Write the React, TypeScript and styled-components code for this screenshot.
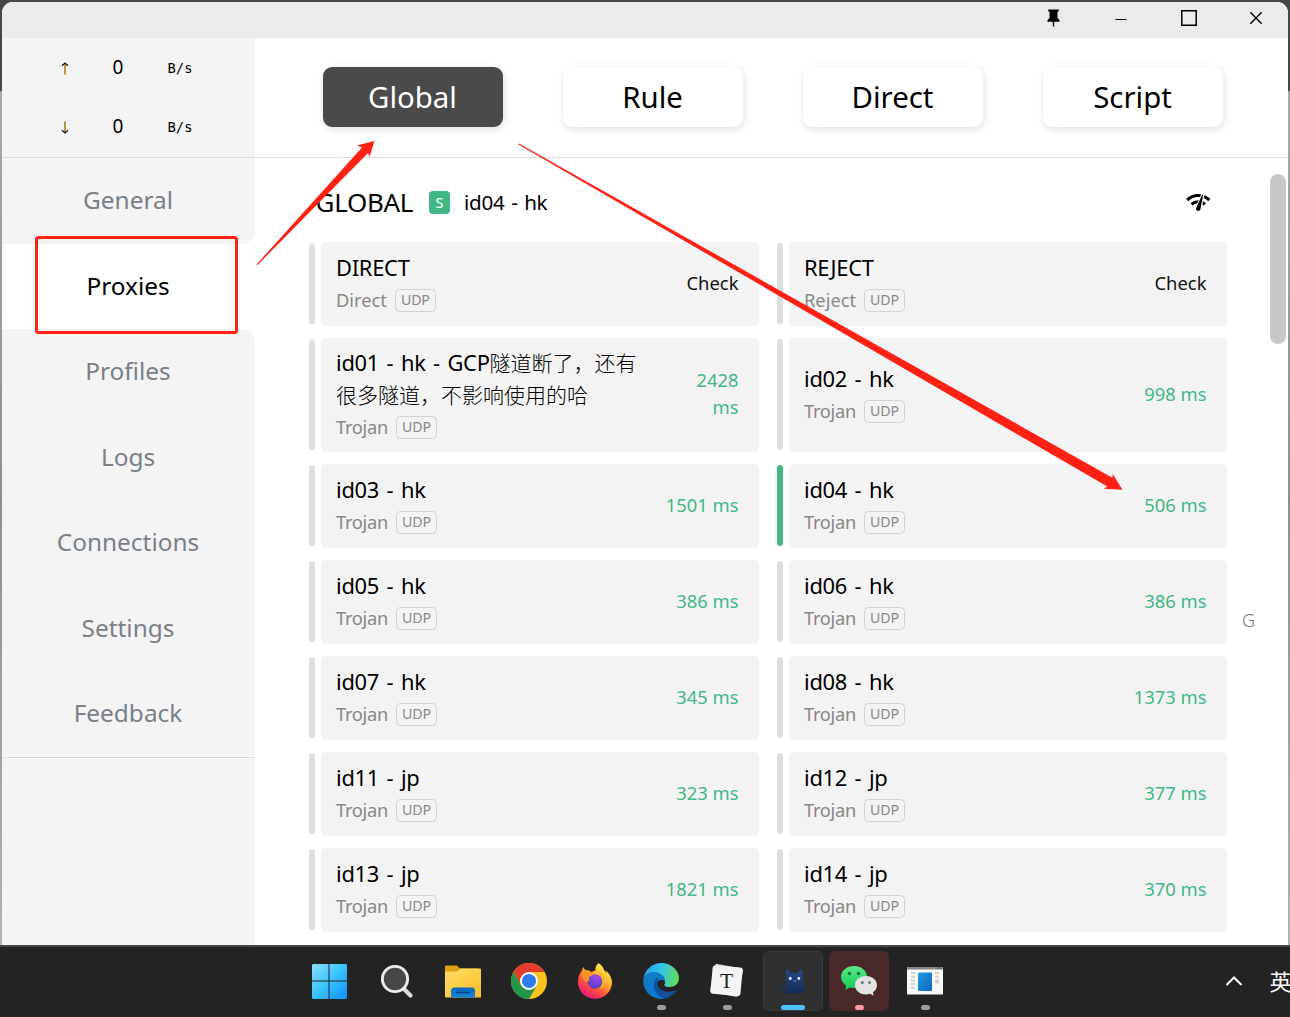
import React from "react";
import styled, { createGlobalStyle } from "styled-components";
import { MdNetworkCheck } from "react-icons/md";

const GlobalStyle = createGlobalStyle`
  * { box-sizing: border-box; }
  body {
    margin: 0;
    font-family: "Noto Sans", "Noto Sans CJK SC", sans-serif;
    color: #000;
    overflow: hidden;
  }
`;

const Desktop = styled.div`
  position: relative;
  width: 1290px;
  height: 1017px;
  overflow: hidden;
  display: flex;
  flex-direction: column;
  background: linear-gradient(#484646 0, #484646 90px, #a9a9a9 92px, #a0a0a0 220px, #8f8f8f 500px, #b2b2b2 945px);
`;

const Window = styled.div`
  flex: none;
  width: 1286px;
  height: 943px;
  margin: 2px 2px 0;
  display: flex;
  flex-direction: column;
  background: #fff;
  border-radius: 11px 11px 0 0;
  overflow: hidden;
`;

const TitleBar = styled.div`
  flex: none;
  height: 36px;
  padding-right: 12px;
  display: flex;
  justify-content: flex-end;
  gap: 27.5px;
  background: #ebebeb;
`;

const TitleButton = styled.div`
  width: 40px;
  height: 32px;
  display: flex;
  align-items: center;
  justify-content: center;
  svg { display: block; }
`;

const Body = styled.div`
  flex: 1;
  min-height: 0;
  display: flex;
`;

const Sidebar = styled.div`
  flex: none;
  width: 253px;
  display: flex;
  flex-direction: column;
  background: #fff;
`;

const Traffic = styled.div`
  flex: none;
  height: 120px;
  background: #f4f4f4;
  border-bottom: 1px solid #dcdcdc;
`;

const TrafficRow = styled.div`
  height: 59px;
  padding-left: 50px;
  display: grid;
  grid-template-columns: 26px 80px 44px;
  align-items: center;
  text-align: center;
`;

const TrafficArrow = styled.span`
  display: flex;
  justify-content: center;
  padding-top: 2px;
`;

const TrafficValue = styled.span`
  padding-bottom: 1px;
  font-size: 19px;
  line-height: 28px;
`;

const TrafficUnit = styled.span`
  font: 13.8px/28px "DejaVu Sans Mono", monospace;
  padding-top: 1px;
`;

const NavItem = styled.div<{ $active?: boolean; $corner?: "top" | "bottom" }>`
  flex: none;
  height: 85.5px;
  padding: 0 1px 1px 0;
  display: flex;
  align-items: center;
  justify-content: center;
  font-size: 24.4px;
  line-height: 36px;
  color: ${(p) => (p.$active ? "#000" : "#788088")};
  background: ${(p) => (p.$active ? "#fff" : "#f4f4f4")};
  border-radius: ${(p) => (p.$corner === "bottom" ? "0 0 14px 0" : p.$corner === "top" ? "0 14px 0 0" : "0")};

  &:last-of-type { height: 85px; }
`;

const SidebarFill = styled.section`
  flex: 1;
  margin-top: 1px;
  background: #f4f4f4;
  border-top: 1px solid #dcdcdc;
`;

const Main = styled.div`
  flex: 1;
  min-width: 0;
  display: flex;
  flex-direction: column;
`;

const Modes = styled.div`
  flex: none;
  height: 120px;
  padding: 29px 0 0 68px;
  display: flex;
  gap: 60px;
  border-bottom: 1px solid #dcdcdc;
`;

const ModeButton = styled.div<{ $active?: boolean }>`
  width: 180px;
  height: 60px;
  padding-right: 1px;
  border-radius: 9px;
  display: flex;
  align-items: center;
  justify-content: center;
  font-size: 29.4px;
  line-height: 60px;
  color: ${(p) => (p.$active ? "#fff" : "#000")};
  background: ${(p) => (p.$active ? "#4a4a4a" : "#fff")};
  box-shadow: 1px 2px 9px rgba(0, 0, 0, 0.13);
`;

const Scroller = styled.div`
  flex: 1;
  min-height: 0;
  display: flex;
  overflow: hidden;
`;

const Group = styled.div`
  width: 918px;
  margin-left: 54px;
`;

const GroupHead = styled.div`
  height: 84px;
  padding: 4px 16px 0 6.500px;
  display: flex;
  align-items: center;
  line-height: 40px;
`;

const GroupName = styled.span`
  width: 113.500px;
  font-size: 26px;
  letter-spacing: -0.3px;
  white-space: nowrap;
`;

const SelectorBadge = styled.span`
  width: 21px;
  height: 23px;
  border-radius: 4px;
  background: #41b883;
  color: #fff;
  font-size: 14.5px;
  line-height: 23px;
  text-align: center;
`;

const CurrentProxy = styled.span`
  flex: 1;
  padding-left: 14px;
  font-size: 20.6px;
  letter-spacing: -0.25px;
  word-spacing: 1.5px;
`;

const Grid = styled.div`
  display: grid;
  grid-template-columns: 450px 450px;
  column-gap: 18px;
  row-gap: 12px;
`;

const Proxy = styled.div`
  display: flex;
  gap: 6px;
`;

const Marker = styled.div<{ $on?: boolean }>`
  width: 6px;
  margin: 1px 0 2px;
  border-radius: 3px;
  background: ${(p) => (p.$on ? "#41b883" : "#dedede")};
`;

const Card = styled.div`
  flex: 1;
  min-height: 84px;
  padding: 10px 20.500px 10px 15px;
  display: flex;
  align-items: center;
  justify-content: space-between;
  border-radius: 4.5px;
  background: #f3f3f3;
`;

const ProxyName = styled.div`
  margin-top: -1px;
  padding-bottom: 1px;
  font-size: 21.9px;
  line-height: 32px;
  letter-spacing: -0.27px;
  word-spacing: 2.1px;
  white-space: pre;
`;

const Cjk = styled.span`
  font-size: 21px;
  line-height: 1;
  letter-spacing: 0;
  font-family: "Noto Sans CJK SC", sans-serif;
  font-weight: 300;
`;

const ProxyMeta = styled.div<{ $tight?: boolean }>`
  height: 30px;
  display: flex;
  align-items: center;
  gap: 8px;
  font-size: 18.3px;
  letter-spacing: ${(p) => (p.$tight ? "-0.3px" : "0")};
  line-height: 30px;
  color: #888;
`;

const Tag = styled.span`
  height: 23px;
  padding: 0 5px;
  border: 1px solid #d2d2d2;
  border-radius: 4.5px;
  font-size: 14.2px;
  letter-spacing: -0.15px;
  line-height: 20px;
`;

const Delay = styled.div<{ $pending?: boolean }>`
  padding-bottom: 4px;
  font-size: 18.4px;
  line-height: 27px;
  text-align: right;
  white-space: pre;
  color: ${(p) => (p.$pending ? "#111" : "#41b883")};
`;

const LetterIndex = styled.div`
  width: 43px;
  padding-top: 449px;
  text-align: center;
  font-size: 18px;
  line-height: 27px;
  font-weight: 300;
  color: #777;
`;

const Thumb = styled.div`
  width: 16px;
  height: 170px;
  margin-top: 16px;
  border-radius: 8px;
  background: #c9c8c7;
`;

const Annotation = styled.svg`
  position: absolute;
  left: 0;
  top: 0;
  pointer-events: none;
`;

const Taskbar = styled.div`
  flex: none;
  height: 72px;
  display: flex;
  align-items: flex-start;
  justify-content: space-between;
  padding: 4px 0 0 301px;
  background: #232323;
  border-top: 2px solid #464646;
`;

const Apps = styled.div`
  display: flex;
  gap: 6px;
`;

const AppSlot = styled.div<{ $tone?: "active" | "alert" }>`
  position: relative;
  width: 60px;
  height: 60px;
  display: flex;
  align-items: center;
  justify-content: center;
  border-radius: 6px;
  border: 1px solid ${(p) => (p.$tone === "active" ? "#3b3b3b" : "transparent")};
  background: ${(p) => (p.$tone === "active" ? "#303030" : p.$tone === "alert" ? "#482828" : "transparent")};
  svg { display: block; }
`;

const Indicator = styled.span<{ $w: number; $color: string }>`
  position: absolute;
  bottom: 0;
  left: calc(50% - ${(p) => p.$w / 2}px);
  width: ${(p) => p.$w}px;
  height: 5px;
  border-radius: 2.5px;
  background: ${(p) => p.$color};
`;

const Tray = styled.div`
  height: 60px;
  width: 65px;
  padding-bottom: 3px;
  display: flex;
  align-items: center;
  gap: 26.5px;
  color: #fff;
  font: 22px/34px "Noto Sans CJK SC", sans-serif;
  overflow: hidden;
  white-space: nowrap;
  svg { flex: none; margin-top: 2px; }
`;

const StartSvg = styled.svg`
  margin-left: -4px;
`;

const WindowsLogo = () => (
  <StartSvg width="36" height="36" viewBox="0 0 36 36">
    <defs>
      <linearGradient id="win" x1="0" y1="0" x2="36" y2="36" gradientUnits="userSpaceOnUse">
        <stop stopColor="#8fe0ff" /><stop offset=".5" stopColor="#3ac4fb" /><stop offset="1" stopColor="#0c90fb" />
      </linearGradient>
    </defs>
    <path fill="url(#win)" d="M2 1H17.500v16.500H1V2ZM18.500 1H35l1 1V17.500h-17.500ZM1 18.500H17.500V36H2l-1-1ZM18.500 18.500H36V35l-1 1H18.500Z" />
  </StartSvg>
);

const SearchIcon = () => (
  <svg width="36" height="36" viewBox="0 0 36 36">
    <path d="M25 26l6.500 6.500" stroke="#d9dadd" strokeWidth="4.200" strokeLinecap="round" />
    <circle cx="16" cy="16" r="12.600" fill="#474747" stroke="#ececec" strokeWidth="2.900" />
  </svg>
);

const ExplorerIcon = () => (
  <svg width="36" height="36" viewBox="0 0 36 36">
    <defs>
      <linearGradient id="folder" x1="0" y1="0" x2="1" y2="1"><stop stopColor="#ffdc6b" /><stop offset="1" stopColor="#fdbe20" /></linearGradient>
      <linearGradient id="dock" x1="0" y1="0" x2="0" y2="1"><stop stopColor="#0a65b5" /><stop offset="1" stopColor="#128be0" /></linearGradient>
    </defs>
    <path fill="#dfa00e" d="M0 3.500Q0 2.500 1 2.500H12l3 3H33v6H0Z" />
    <path fill="url(#folder)" d="M0 8.500H12l3.500-3H35q1 0 1 1V34.500H1q-1 0-1-1Z" />
    <path fill="url(#dock)" d="M6 34.500V28q0-3.500 3.500-3.500h17q3.500 0 3.500 3.500v6.500Z" />
    <path d="M11.500 29.500h13" stroke="#07457f" strokeWidth="1.600" strokeLinecap="round" />
  </svg>
);

const ChromeIcon = () => (
  <svg width="36" height="36" viewBox="0 0 36 36">
    <circle cx="18" cy="18" r="18" fill="#fcc31e" />
    <path fill="#e33b2e" d="M18 18V9H33.590A18 18 0 0 0 2.410 9L10.200 22.500Z" />
    <path fill="#229548" d="M2.410 9A18 18 0 0 0 18 36L25.800 22.500 18 24 10.200 22.500Z" />
    <circle cx="18" cy="18" r="9" fill="#fff" />
    <circle cx="18" cy="18" r="7.100" fill="#2f7bee" />
  </svg>
);

const FirefoxIcon = () => (
  <svg width="36" height="36" viewBox="0 0 36 36">
    <defs>
      <linearGradient id="fire" x1="30" y1="3" x2="8" y2="34" gradientUnits="userSpaceOnUse">
        <stop stopColor="#fff44f" /><stop offset=".38" stopColor="#ffb02b" /><stop offset=".65" stopColor="#ff5535" /><stop offset="1" stopColor="#ec1583" />
      </linearGradient>
      <radialGradient id="globe" cx=".6" cy=".2" r=".9"><stop stopColor="#a04dea" /><stop offset="1" stopColor="#493bbd" /></radialGradient>
    </defs>
    <path fill="url(#fire)" d="M21.500 0q4.500 3 5.500 7 1.500 1 2.500 3.500 0-1.500-.5-3 6 5.500 6 12.500A17 16.500 0 0 1 1 18.500Q1 12 5 7.500q0-2 1.500-3.500.5 2 2 3 3.500 0 6 2 1.500-1 4-1.500-1-4 3-7.500Z" />
    <circle cx="18" cy="18.500" r="7.300" fill="url(#globe)" />
    <path fill="#ff9526" d="M5 8q4-1 6 1 3-1 6 1 0 2-3 3l-2 1q-1 2 1 3.500-3 0-4 2Q5 17 5 8Z" />
    <path fill="#ffae2b" d="M18 8q8 0 9.500 9 1 7-5 9.500 4-5 2.500-10-1-5-7-8.500Z" />
  </svg>
);

const EdgeIcon = () => (
  <svg width="36" height="36" viewBox="0 0 36 36">
    <defs>
      <linearGradient id="edgeTop" x1="1" y1="10" x2="36" y2="18" gradientUnits="userSpaceOnUse"><stop stopColor="#269fe0" /><stop offset=".45" stopColor="#35c5e8" /><stop offset="1" stopColor="#67df4a" /></linearGradient>
      <linearGradient id="edgeLeft" x1="0" y1="12" x2="14" y2="36" gradientUnits="userSpaceOnUse"><stop stopColor="#1679be" /><stop offset="1" stopColor="#087bd3" /></linearGradient>
    </defs>
    <path fill="url(#edgeTop)" d="M.5 15.500A18 18 0 0 1 18 0c11 0 18 8 18 15 0 6-4.500 9-9.500 9-4 0-6-1.500-5.500-3 2-3 .5-8-4-10C11 8.500 4 10 .5 15.500Z" />
    <path fill="url(#edgeLeft)" d="M.2 17C1 12.500 5.500 9 11 9c6 0 11 4.500 11 9 0 2-1 3-1 3-1-3-5-3.500-7-1.500-5 5 0 14 8 16A18 18 0 0 1 .2 17Z" />
    <path fill="#11509b" d="M14 14.500c-6 6-3 18 8 21 5-1 9-4.500 11.300-7.300.4-.7-.2-1.300-1-.9C22 31.500 14 26 14.500 19c0-2 1-3.500 1-3.500Z" />
    <path fill="#232323" d="M14.300 20c.3-2 2-3.300 4-3.300 2.500 0 4 1.800 3.700 3.500-.2 1-1 1.500-1 2.500 0 2.500 3 4.300 7 4.300 2.500 0 4-.5 5.300-1l.2 1C24 30.500 14.500 27 14.300 20Z" />
  </svg>
);

const TyporaIcon = () => (
  <svg width="36" height="36" viewBox="0 0 36 36">
    <rect x="3" y="3" width="29" height="29" rx="2.500" fill="#d9d9d9" transform="rotate(10 18 18)" />
    <rect x="2.500" y="3.500" width="30" height="28.500" rx="2.500" fill="#f4f4f4" transform="rotate(5 18 18)" />
    <text x="17.500" y="25" fontFamily="Liberation Serif, serif" fontSize="21.500" textAnchor="middle" fill="#222">T</text>
  </svg>
);

const ClashIcon = () => (
  <svg width="36" height="36" viewBox="0 0 36 36">
    <defs><linearGradient id="cat" x1="0" y1="0" x2="0" y2="1"><stop stopColor="#234b86" /><stop offset="1" stopColor="#142a55" /></linearGradient></defs>
    <path d="M12 29.500H8Q3 28 6.500 23.500" stroke="#1b315c" strokeWidth="1.800" fill="none" strokeLinecap="round" />
    <path fill="url(#cat)" d="M10.800 7q.8-1.200 2 0l3 3.300q3.200-.8 6.400 0l3-3.300q1.500-1 2 .5L28 19l1 9q.2 2.200-1.500 2.200H11q-2 0-1.500-2.200L11.500 20Z" />
    <circle cx="15.300" cy="15.500" r="1.400" fill="#edf6ff" /><circle cx="23.800" cy="15.500" r="1.400" fill="#edf6ff" />
    <path d="M18 17.700l1.500.7 1.500-.7" stroke="#87a7cf" strokeWidth=".8" fill="none" />
  </svg>
);

const WeChatIcon = () => (
  <svg width="36" height="36" viewBox="0 0 36 36">
    <defs>
      <linearGradient id="chat" x1="0" y1="0" x2="0" y2="1"><stop stopColor="#5ce883" /><stop offset="1" stopColor="#12c95e" /></linearGradient>
    </defs>
    <path fill="url(#chat)" d="M13 3c7.200 0 13 4.700 13 11s-5.800 11-13 11q-2 0-4-.6L4.500 27l.5-4.500C2 20.500 0 17.500 0 14 0 7.700 5.800 3 13 3Z" />
    <circle cx="8.500" cy="10.500" r="1.800" fill="#137a40" /><circle cx="17.500" cy="10.500" r="1.800" fill="#137a40" />
    <path fill="#e3e3e3" d="M25 13c6.200 0 11 4 11 9.300 0 3-1.500 5.300-4 7l.5 3.500-3.500-2q-2 .6-4 .6c-6.200 0-11-4-11-9.200S18.800 13 25 13Z" />
    <circle cx="21.300" cy="19.500" r="1.500" fill="#777" /><circle cx="28.500" cy="19.500" r="1.500" fill="#777" />
  </svg>
);

const PanelIcon = () => (
  <svg width="36" height="36" viewBox="0 0 36 36">
    <defs><linearGradient id="panel" x1="0" y1="0" x2="1" y2="1"><stop stopColor="#249de8" /><stop offset="1" stopColor="#0b63b8" /></linearGradient></defs>
    <rect y="4" width="36" height="27.500" rx=".8" fill="#f8f8f8" />
    <path fill="#858585" d="M0 4.800Q0 4 .8 4H35.200q.8 0 .8.800V6.500H0Z" />
    <path d="M30.500 5h1M33 5h1" stroke="#222" strokeWidth="1" />
    <path d="M4 10h4M4 13.700h4M4 17.400h4M4 21.100h4M4 24.800h4M28 10h4M28 13.700h4M28 17.400h4M28 19.500h4" stroke="#d0d0d0" strokeWidth="2" />
    <rect x="11" y="9.500" width="14" height="18.500" rx="1" fill="url(#panel)" />
  </svg>
);

const apps: { icon: React.ReactNode; tone?: "active" | "alert"; bar?: [number, string] }[] = [
  { icon: <WindowsLogo /> },
  { icon: <SearchIcon /> },
  { icon: <ExplorerIcon /> },
  { icon: <ChromeIcon /> },
  { icon: <FirefoxIcon /> },
  { icon: <EdgeIcon />, bar: [9, "#9c9c9c"] },
  { icon: <TyporaIcon />, bar: [9, "#9c9c9c"] },
  { icon: <ClashIcon />, tone: "active", bar: [24, "#4cc2ff"] },
  { icon: <WeChatIcon />, tone: "alert", bar: [9, "#ff99a4"] },
  { icon: <PanelIcon />, bar: [9, "#9c9c9c"] },
];

const longName = (
  <>
    id01 - hk - GCP<Cjk>隧道断了，还有{"\n"}很多隧道，不影响使用的哈</Cjk>
  </>
);

const proxies: { name: React.ReactNode; type: string; delay?: string; on?: boolean }[] = [
  { name: "DIRECT", type: "Direct" },
  { name: "REJECT", type: "Reject" },
  { name: longName, type: "Trojan", delay: "2428\nms" },
  { name: "id02 - hk", type: "Trojan", delay: "998 ms" },
  { name: "id03 - hk", type: "Trojan", delay: "1501 ms" },
  { name: "id04 - hk", type: "Trojan", delay: "506 ms", on: true },
  { name: "id05 - hk", type: "Trojan", delay: "386 ms" },
  { name: "id06 - hk", type: "Trojan", delay: "386 ms" },
  { name: "id07 - hk", type: "Trojan", delay: "345 ms" },
  { name: "id08 - hk", type: "Trojan", delay: "1373 ms" },
  { name: "id11 - jp", type: "Trojan", delay: "323 ms" },
  { name: "id12 - jp", type: "Trojan", delay: "377 ms" },
  { name: "id13 - jp", type: "Trojan", delay: "1821 ms" },
  { name: "id14 - jp", type: "Trojan", delay: "370 ms" },
];

const nav = ["General", "Proxies", "Profiles", "Logs", "Connections", "Settings", "Feedback"];

const Arrow = ({ down }: { down?: boolean }) => (
  <svg width="8" height="13" viewBox="0 0 8 13">
    <g transform={down ? "rotate(180 4 6.500)" : undefined} fill="none">
      <path d="M4 1v11.500" stroke="#a87514" strokeWidth="1.500" />
      <path d="M1 3.800 4 1l3 2.800" stroke="#111" strokeWidth="1.200" />
    </g>
  </svg>
);

export default function App() {
  return (
    <Desktop>
      <GlobalStyle />
      <Window>
        <TitleBar>
          <TitleButton>
            <svg width="13" height="18" viewBox="0 0 13 18">
              <path d="M1.200.5h10.600v2H10.500V9l2 2v1.800H7.200v4.700H5.800v-4.700H.5V11l2-2V2.500H1.200Z" />
            </svg>
          </TitleButton>
          <TitleButton>
            <svg width="12" height="12" viewBox="0 0 12 12"><path d="M.5 7.500h11" stroke="#000" strokeWidth="1.200" /></svg>
          </TitleButton>
          <TitleButton>
            <svg width="16" height="16" viewBox="0 0 16 16"><path d="M.8.8h14.400v14.400H.8Z" fill="none" stroke="#000" strokeWidth="1.500" /></svg>
          </TitleButton>
          <TitleButton>
            <svg width="14" height="14" viewBox="0 0 14 14"><path d="M1.300 1.300l11.400 11.400M12.700 1.300 1.300 12.700" stroke="#000" strokeWidth="1.400" /></svg>
          </TitleButton>
        </TitleBar>
        <Body>
          <Sidebar>
            <Traffic>
              {[false, true].map((down) => (
                <TrafficRow key={String(down)}>
                  <TrafficArrow><Arrow down={down} /></TrafficArrow>
                  <TrafficValue>0</TrafficValue>
                  <TrafficUnit>B/s</TrafficUnit>
                </TrafficRow>
              ))}
            </Traffic>
            {nav.map((label, i) => (
              <NavItem key={label} $active={i === 1} $corner={i === 0 ? "bottom" : i === 2 ? "top" : undefined}>
                {label}
              </NavItem>
            ))}
            <SidebarFill />
          </Sidebar>
          <Main>
            <Modes>
              {["Global", "Rule", "Direct", "Script"].map((m, i) => (
                <ModeButton key={m} $active={i === 0}>{m}</ModeButton>
              ))}
            </Modes>
            <Scroller>
              <Group>
                <GroupHead>
                  <GroupName>GLOBAL</GroupName>
                  <SelectorBadge>S</SelectorBadge>
                  <CurrentProxy>id04 - hk</CurrentProxy>
                  <MdNetworkCheck size={26.5} />
                </GroupHead>
                <Grid>
                  {proxies.map((p, i) => (
                    <Proxy key={i}>
                      <Marker $on={p.on} />
                      <Card>
                        <div>
                          <ProxyName>{p.name}</ProxyName>
                          <ProxyMeta $tight={p.type === "Trojan"}>{p.type}<Tag>UDP</Tag></ProxyMeta>
                        </div>
                        <Delay $pending={!p.delay}>{p.delay ?? "Check"}</Delay>
                      </Card>
                    </Proxy>
                  ))}
                </Grid>
              </Group>
              <LetterIndex>G</LetterIndex>
              <Thumb />
            </Scroller>
          </Main>
        </Body>
      </Window>
      <Taskbar>
        <Apps>
          {apps.map((a, i) => (
            <AppSlot key={i} $tone={a.tone}>
              {a.icon}
              {a.bar && <Indicator $w={a.bar[0]} $color={a.bar[1]} />}
            </AppSlot>
          ))}
        </Apps>
        <Tray>
          <svg width="18" height="12" viewBox="0 0 18 12"><path d="M1.500 10 9 2.500l7.500 7.500" fill="none" stroke="#fff" strokeWidth="2" /></svg>
          英
        </Tray>
      </Taskbar>
      <Annotation width="1290" height="1017" viewBox="0 0 1290 1017">
        <rect x="36.500" y="237.500" width="200" height="95" rx="2" fill="none" stroke="#ff2113" strokeWidth="3" />
        <path fill="#ff2113" d="M256.500 264.500 362 147.500 357 145.500 374.500 141 369.500 156.700 368 153 257.500 265Z" />
        <path fill="#ff2113" d="M519 143.500 1112.300 477.700 1112.700 474 1122.400 489.700 1103.700 488.700 1107.300 486.500 518.500 144.500Z" />
      </Annotation>
    </Desktop>
  );
}
